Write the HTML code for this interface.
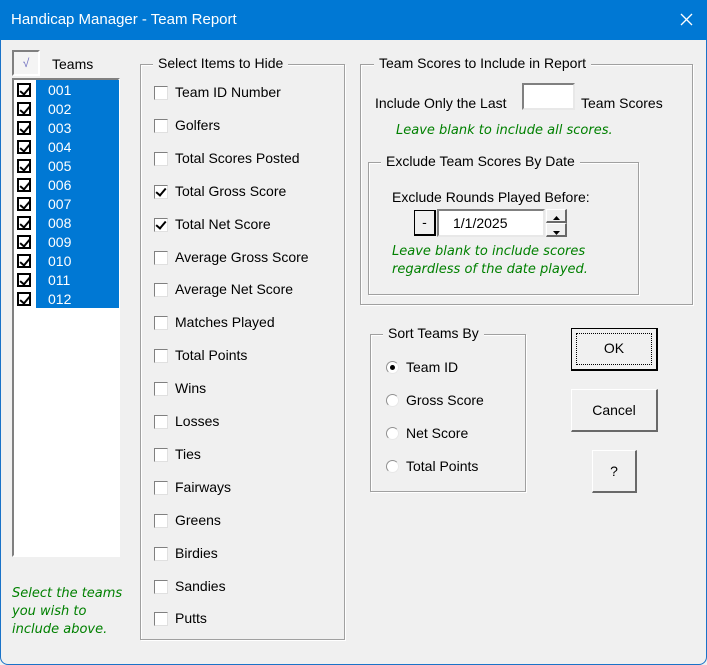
<!DOCTYPE html>
<html><head><meta charset="utf-8"><style>
*{box-sizing:border-box;margin:0;padding:0}
body{width:707px;height:665px;overflow:hidden;background:#f0f0f0;font-family:"Liberation Sans",sans-serif;font-size:14px;color:#000;position:relative}
.a{position:absolute;white-space:nowrap}
.win{position:absolute;left:0;top:0;width:707px;height:665px;border:1px solid #1a73c8;border-radius:0 0 8px 8px}
.title{position:absolute;left:0;top:0;width:707px;height:40px;background:#0078d4;color:#fff;font-size:15px}
.fr{position:absolute;border:1px solid #a0a0a0;box-shadow:1px 1px 0 #fff,inset 1px 1px 0 #fff}
.lg{position:absolute;background:#f0f0f0;padding:0 5px;top:-10px;white-space:nowrap}
.cb{position:absolute;width:14px;height:14px;background:#fff;border:1px solid #808080;border-right-color:#e0e0e0;border-bottom-color:#e0e0e0}
.cb.k::after{content:"";position:absolute;left:3px;top:0px;width:4px;height:8px;border:solid #000;border-width:0 2px 2px 0;transform:rotate(40deg)}
.g{color:#008000;font-style:italic;font-family:"DejaVu Sans",sans-serif;font-size:13px}
.btn{position:absolute;background:#f0f0f0;border:1px solid #fff;border-right:2px solid #696969;border-bottom:2px solid #696969;text-align:center}
.rd{position:absolute;width:13px;height:13px;border-radius:50%;background:#fff;border:1px solid #909090;border-right-color:#e8e8e8;border-bottom-color:#e8e8e8}
</style></head><body>
<div class="win"></div>
<div class="title"><span class="a" style="left:11px;top:11px">Handicap Manager - Team Report</span>
<svg class="a" style="left:680px;top:13px" width="13" height="13"><path d="M1 1L12 12M12 1L1 12" stroke="#fff" stroke-width="1.3"/></svg></div>

<div class="a" style="left:12px;top:50px;width:28px;height:26px;border:2px solid #808080;border-right-color:#fff;border-bottom-color:#fff;background:#f4f4f4;text-align:center;color:#7070c0;font-size:12px;line-height:22px">√</div>
<span class="a" style="left:52px;top:56px">Teams</span>
<div class="a" style="left:12px;top:78px;width:108px;height:479px;background:#fff;border:2px solid #808080;border-right-color:#fff;border-bottom-color:#fff"></div>
<div class="a" style="left:36px;top:80px;width:83px;height:228px;background:#0078d4"></div>
<div id="teams"></div>
<div class="g a" style="left:12px;top:585px;line-height:18px">Select the teams<br>you wish to<br>include above.</div>

<div class="fr" style="left:140px;top:64px;width:205px;height:576px"><span class="lg" style="left:12px">Select Items to Hide</span></div>
<div id="items"></div>

<div class="fr" style="left:360px;top:64px;width:333px;height:241px"><span class="lg" style="left:13px">Team Scores to Include in Report</span></div>
<span class="a" style="left:375px;top:95px">Include Only the Last</span>
<div class="a" style="left:522px;top:83px;width:53px;height:27px;background:#fff;border:2px solid #808080;border-right-color:#e8e8e8;border-bottom-color:#e8e8e8"></div>
<span class="a" style="left:581px;top:95px">Team Scores</span>
<span class="g a" style="left:396px;top:123px">Leave blank to include all scores.</span>

<div class="fr" style="left:368px;top:162px;width:271px;height:133px"><span class="lg" style="left:12px">Exclude Team Scores By Date</span></div>
<span class="a" style="left:392px;top:189px">Exclude Rounds Played Before:</span>
<div class="btn" style="left:414px;top:210px;width:22px;height:26px;border:1px solid #000;border-right:2px solid #000;border-bottom:2px solid #000;line-height:22px">-</div>
<div class="a" style="left:437px;top:209px;width:108px;height:28px;background:#fff;border:2px solid #808080;border-right-color:#e8e8e8;border-bottom-color:#e8e8e8;padding-left:14px;line-height:24px">1/1/2025</div>
<div class="btn" style="left:546px;top:209px;width:21px;height:14px"><svg width="17" height="10"><path d="M5 7L8.5 3L12 7Z" fill="#000"/></svg></div>
<div class="btn" style="left:546px;top:223px;width:21px;height:14px"><svg width="17" height="10"><path d="M5 4L8.5 8L12 4Z" fill="#000"/></svg></div>
<div class="g a" style="left:392px;top:243px;line-height:18px">Leave blank to include scores<br>regardless of the date played.</div>

<div class="fr" style="left:370px;top:334px;width:156px;height:158px"><span class="lg" style="left:12px">Sort Teams By</span></div>
<div class="rd" style="left:386px;top:361px"><div style="position:absolute;left:3px;top:3px;width:5px;height:5px;border-radius:50%;background:#000"></div></div>
<span class="a" style="left:406px;top:359px">Team ID</span>
<div class="rd" style="left:386px;top:394px"></div><span class="a" style="left:406px;top:392px">Gross Score</span>
<div class="rd" style="left:386px;top:427px"></div><span class="a" style="left:406px;top:425px">Net Score</span>
<div class="rd" style="left:386px;top:460px"></div><span class="a" style="left:406px;top:458px">Total Points</span>

<div class="btn" style="left:571px;top:328px;width:87px;height:43px;border:1px solid #000;border-right:2px solid #000;border-bottom:2px solid #000;line-height:38px"><div style="position:absolute;left:4px;top:4px;right:4px;bottom:4px;border:1px dotted #000"></div>OK</div>
<div class="btn" style="left:571px;top:389px;width:87px;height:43px;line-height:40px">Cancel</div>
<div class="btn" style="left:592px;top:450px;width:45px;height:43px;line-height:40px">?</div>

<script>
var t="";for(var i=0;i<12;i++){var y=80+i*19;var n=("00"+(i+1)).slice(-3);
t+='<div class="cb k" style="left:17px;top:'+(y+3)+'px;border-color:#000;border-width:2px"></div><span class="a" style="left:48px;top:'+(y+2)+'px;color:#fff">'+n+'</span>';}
document.getElementById("teams").innerHTML=t;
var it=["Team ID Number","Golfers","Total Scores Posted","Total Gross Score","Total Net Score","Average Gross Score","Average Net Score","Matches Played","Total Points","Wins","Losses","Ties","Fairways","Greens","Birdies","Sandies","Putts"];
var s="";for(var j=0;j<it.length;j++){var c=93+j*32.9;var k=(j==3||j==4)?" k":"";
s+='<div class="cb'+k+'" style="left:154px;top:'+(c-7)+'px"></div><span class="a" style="left:175px;top:'+(c-9)+'px">'+it[j]+'</span>';}
document.getElementById("items").innerHTML=s;
</script>
</body></html>
